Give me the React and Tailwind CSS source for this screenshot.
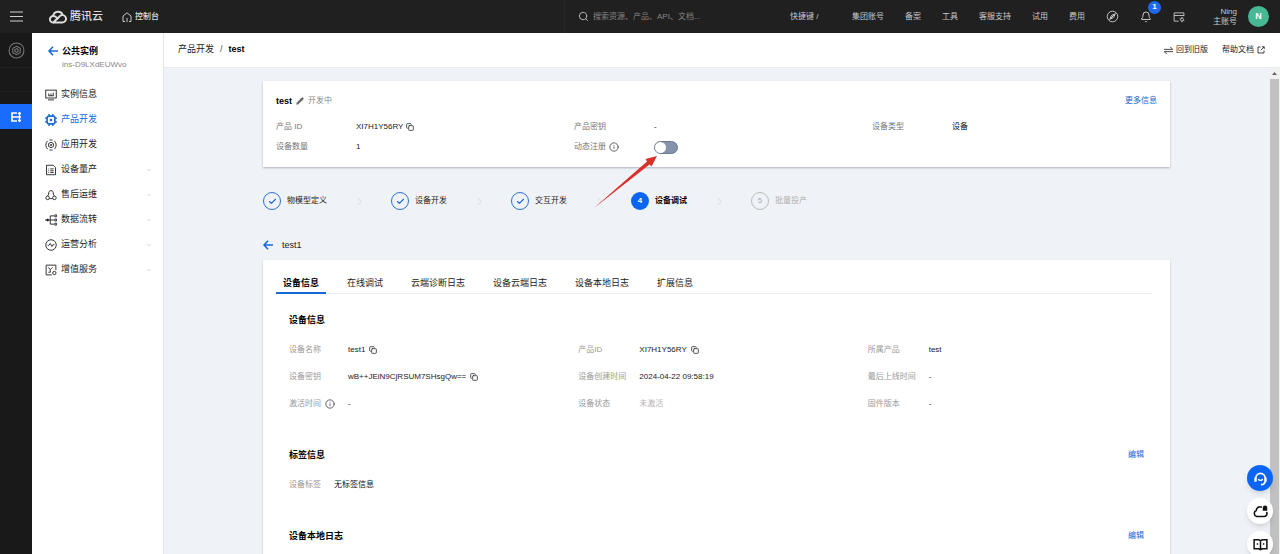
import { useState } from "react";
import { Bell, Check, ChevronDown, ChevronRight, Copy, Info, Pencil, Search } from "lucide-react";

// Small line icons, all on a 16x16 grid
const Glyph = ({ children, size = 12, className = "" }) => (
  <svg width={size} height={size} viewBox="0 0 16 16" fill="none" stroke="currentColor" strokeWidth="1.2" className={`shrink-0 ${className}`} aria-hidden="true">
    {children}
  </svg>
);

const icons = {
  info: (
    <Glyph>
      <rect x="1" y="1.500" width="14" height="10.500" />
      <path d="M4 14.500h8M5 6v3M8 6v3M11 5v4M4.500 9h7" />
    </Glyph>
  ),
  product: (
    <Glyph>
      <rect x="2.800" y="2.800" width="10.400" height="10.400" rx="2.500" strokeWidth="2.200" />
      <path d="M5.500 0v3M10.500 0v3M5.500 13v3M10.500 13v3M0 5.500h3M0 10.500h3M13 5.500h3M13 10.500h3" strokeWidth="1.800" />
      <rect x="7" y="7" width="2" height="2" fill="currentColor" />
    </Glyph>
  ),
  app: (
    <Glyph>
      <path d="M3.500 2.500a7.500 7.500 0 0 0 0 11M12.500 2.500a7.500 7.500 0 0 1 0 11M6 1.300h4M6 14.700h4" />
      <path d="M8 4.300l3.200 1.800v3.800L8 11.700 4.800 9.900V6.100z" />
      <circle cx="8" cy="8" r="1" />
    </Glyph>
  ),
  mass: (
    <Glyph>
      <path d="M2 1.700h9l3 3v9.600H2z" />
      <path d="M4.500 6.500h1M7 6.500h4.500M4.500 9h1M7 9h4.500M4.500 11.300h1M7 11.300h4.500" />
    </Glyph>
  ),
  service: (
    <Glyph>
      <path d="M3.500 9.300L5.300 6M12.500 9.300L10.700 6M6 12.800h4" />
      <path d="M5 6.500a3.200 3.200 0 1 1 6 0" />
      <circle cx="3.500" cy="11.800" r="2.400" />
      <circle cx="12.500" cy="11.800" r="2.400" />
    </Glyph>
  ),
  flow: (
    <Glyph>
      <path d="M0 8h12M7 2.500v11M7 2.500h5M7 13.500h5" />
      <path d="M13 1.200h2.500v2.500H13zM13 6.800h2.500v2.500H13zM13 12.300h2.500v2.500H13z" />
      <circle cx="3.500" cy="8" r="1.200" fill="currentColor" />
    </Glyph>
  ),
  analysis: (
    <Glyph>
      <circle cx="8" cy="8" r="7" />
      <path d="M3.500 8.500h1.700L7 6l2.300 4 1.500-2.500h1.700" />
    </Glyph>
  ),
  value: (
    <Glyph>
      <path d="M14.500 8V1.500h-13v13H9" />
      <path d="M4.500 4.500l2.500 3 3-3M7 7.500V11M4.500 11H7" />
      <circle cx="12.500" cy="12" r="2.200" />
    </Glyph>
  ),
};

const menu = [
  { label: "实例信息", icon: "info" },
  { label: "产品开发", icon: "product", active: true },
  { label: "应用开发", icon: "app" },
  { label: "设备量产", icon: "mass", sub: true },
  { label: "售后运维", icon: "service", sub: true },
  { label: "数据流转", icon: "flow", sub: true },
  { label: "运营分析", icon: "analysis", sub: true },
  { label: "增值服务", icon: "value", sub: true },
];

const topLinks = ["集团账号", "备案", "工具", "客服支持", "试用", "费用"];
const steps = ["物模型定义", "设备开发", "交互开发", "设备调试", "批量投产"];
const tabs = ["设备信息", "在线调试", "云端诊断日志", "设备云端日志", "设备本地日志", "扩展信息"];

const deviceColumns = [
  [
    { label: "设备名称", value: "test1", copy: true },
    { label: "设备密钥", value: "wB++JEiN9CjRSUM7SHsgQw==", copy: true },
    { label: "激活时间", value: "-", info: true },
  ],
  [
    { label: "产品ID", value: "XI7H1Y56RY", copy: true },
    { label: "设备创建时间", value: "2024-04-22 09:58:19" },
    { label: "设备状态", value: "未激活", muted: true },
  ],
  [
    { label: "所属产品", value: "test" },
    { label: "最后上线时间", value: "-" },
    { label: "固件版本", value: "-" },
  ],
];

const BackArrow = () => (
  <svg width="10" height="10" viewBox="0 0 10 10" fill="none" stroke="#1769d8" strokeWidth="1.600" className="shrink-0" aria-hidden="true">
    <path d="M5 .8L1 5l4 4.200M1.200 5H10" />
  </svg>
);

const CopyButton = () => (
  <button type="button" aria-label="复制" className="shrink-0 text-[#333]">
    <Copy size={8} strokeWidth={2.5} />
  </button>
);

const TopBar = () => (
  <header className="flex h-[33px] shrink-0 items-center bg-[#202020] text-[8px] text-[#c8c8c8]">
    <button type="button" aria-label="菜单" className="flex w-8 justify-center">
      <svg width="13" height="11" viewBox="0 0 13 11" stroke="#d0d0d0" strokeWidth="1.200">
        <path d="M0 1h13M0 5.500h13M0 10h13" />
      </svg>
    </button>
    <a href="#" className="ml-[17px] flex items-center gap-[3px] text-[11px] font-medium text-[#dedede]">
      <svg width="18" height="14" viewBox="0 0 18 14" fill="none" stroke="#dedede" strokeWidth="1.900">
        <path d="M5 12.500a3.300 3.300 0 1 1-.7-6.500c1.200 0 2.300.6 3.400 1.700l1.500 1.400" />
        <path d="M4.100 5.900a5 5 0 0 1 9.700-.7M4.500 12.500h8.900a3.700 3.700 0 1 0-2.700-6.300L4.500 12.200" />
      </svg>
      腾讯云
    </a>
    <a href="#" className="ml-[19px] flex items-center gap-[3px] font-medium text-[#dedede]">
      <svg width="10" height="10" viewBox="0 0 10 10" fill="none" stroke="#c8c8c8">
        <path d="M3 9.500H1V4l4-3.200L9 4v5.500H7M5 6v4" />
      </svg>
      控制台
    </a>
    <div className="min-w-4 flex-1" />
    <label className="flex h-full w-[226px] items-center gap-1 border-l border-[#262626] pl-[13px]">
      <Search size={11} className="shrink-0 text-[#bdbdbd]" />
      <input type="search" aria-label="搜索" placeholder="搜索资源、产品、API、文档..." className="min-w-0 flex-1 bg-transparent outline-none placeholder:text-[#858585]" />
    </label>
    <span className="w-[62px] shrink-0">快捷键 /</span>
    <nav className="flex shrink-0 items-center gap-[21px] whitespace-nowrap pr-[11px]">
      {topLinks.map((t) => (
        <a key={t} href="#">{t}</a>
      ))}
      <button type="button" aria-label="探索">
        <Glyph size={13}>
          <circle cx="8" cy="8" r="6.500" />
          <path d="M11.500 4.500L9.300 9.300l-4.800 2.200 2.200-4.800zM5.500 10.500l5-5" />
        </Glyph>
      </button>
      <button type="button" aria-label="消息" className="relative">
        <Bell size={12} strokeWidth={2} />
        <span className="absolute -top-[10px] left-2 flex size-[13px] items-center justify-center rounded-full bg-[#1f69f0] text-[8px] font-bold text-white">1</span>
      </button>
      <button type="button" aria-label="设置">
        <Glyph size={12}>
          <path d="M7.500 13.500h-6v-11h13V7M1.500 6h13" />
          <circle cx="12" cy="11.500" r="2" />
          <path d="M12 8v1.500M12 13.500V15M8.800 9.800l1.400.7M13.800 12.500l1.400.7" />
        </Glyph>
      </button>
      <button type="button" className="ml-[7px] flex items-center gap-[11px]">
        <span className="text-right leading-[10px]">
          Ning
          <br />
          主账号
        </span>
        <span className="flex size-[21px] items-center justify-center rounded-full bg-[#46b893] text-[9px] font-bold text-white">N</span>
      </button>
    </nav>
  </header>
);

const Rail = () => (
  <nav className="w-8 shrink-0 bg-[#191919] text-[#777]">
    <button type="button" aria-label="物联网" className="flex h-[35px] w-full items-center justify-center border-b border-[#222]">
      <Glyph size={17}>
        <circle cx="8" cy="8" r="7" strokeWidth="1" />
        <path d="M8 4l3.500 2v4L8 12l-3.500-2V6zM6.500 7.200L8 6.300l1.500.9v1.700L8 9.800l-1.500-.9z" strokeWidth="1" />
      </Glyph>
    </button>
    <div className="h-6 border-b border-[#202020]" />
    <button type="button" aria-label="物联网开发平台" className="mt-3 flex h-[25px] w-full items-center justify-center bg-[#1a6dfc]">
      <svg width="11" height="10" viewBox="0 0 11 10" fill="none" stroke="#fff" strokeWidth="1.600">
        <path d="M6 1H1v8h5M1 5h9" />
        <path d="M8.500 0v10" strokeWidth="1.300" />
        <path d="M7 1.500h3M7 8.500h3" strokeWidth="1.600" />
      </svg>
    </button>
  </nav>
);

const SideMenu = () => (
  <aside className="w-[132px] shrink-0 border-r border-[#e1e5ea] bg-white text-[9px] text-[#222]">
    <a href="#" className="mt-[11px] flex items-center gap-1 pl-4 font-bold leading-[14px] text-black">
      <BackArrow />
      公共实例
    </a>
    <p className="pl-[30px] text-[8px] leading-[14px] text-[#888]">ins-D9LXdEUWvo</p>
    <ul className="mt-[10px]">
      {menu.map((m) => (
        <li key={m.label}>
          <button type="button" className={`flex h-[25px] w-full items-center pl-[13px] pr-[11px] ${m.active ? "text-[#1769d8]" : ""}`}>
            {icons[m.icon]}
            <span className="ml-1 flex-1 text-left">{m.label}</span>
            {m.sub && <ChevronDown size={6} className="text-[#aaa]" />}
          </button>
        </li>
      ))}
    </ul>
  </aside>
);

const ProductCard = () => {
  const [dynamic, setDynamic] = useState(false);

  return (
    <section className="bg-white pb-[10px] pl-[13px] pt-[12px] shadow-[0_1px_2px_rgba(54,58,80,0.35)]">
      <div className="flex items-center pr-[13px] leading-4">
        <h1 className="text-[9px] font-bold text-black">test</h1>
        <button type="button" aria-label="编辑名称" className="ml-1 text-[#666]">
          <Pencil size={8} fill="currentColor" />
        </button>
        <span className="ml-1 text-[8px] text-[#888]">开发中</span>
        <a href="#" className="ml-auto text-[8px] text-[#1769d8]">更多信息</a>
      </div>
      <dl className="mt-2 grid grid-cols-3 text-[8px] leading-5 text-[#777]">
        <div className="flex">
          <dt className="w-20">产品 ID</dt>
          <dd className="flex items-center gap-[3px] text-[#222]">XI7H1Y56RY <CopyButton /></dd>
        </div>
        <div className="flex">
          <dt className="w-20">产品密钥</dt>
          <dd className="text-[#222]">-</dd>
        </div>
        <div className="flex">
          <dt className="w-20">设备类型</dt>
          <dd className="text-[#111]">设备</dd>
        </div>
        <div className="flex">
          <dt className="w-20">设备数量</dt>
          <dd className="text-[#222]">1</dd>
        </div>
        <div className="flex">
          <dt className="flex w-20 items-center gap-[3px]">
            <label htmlFor="dynamic">动态注册</label>
            <Info size={10} className="text-[#444]" />
          </dt>
          <dd className="relative flex items-center">
            <input
              id="dynamic"
              type="checkbox"
              role="switch"
              checked={dynamic}
              onChange={() => setDynamic(!dynamic)}
              className="h-[13px] w-6 appearance-none rounded-full border border-[#6d7b92] bg-[#8592ab] before:block before:size-[11px] before:rounded-full before:bg-white checked:bg-[#1769d8] checked:before:ml-[11px]"
            />
            {/* pointer arrow to the switch */}
            <svg width="64" height="53" viewBox="0 0 64 53" className="pointer-events-none absolute -left-[60px] top-[19px] z-10" aria-hidden="true">
              <path d="M0 52L53 5.500L51.500 3L63 0L57.500 10.500L55.500 8.500z" fill="#d9302a" />
            </svg>
          </dd>
        </div>
      </dl>
    </section>
  );
};

const Steps = ({ current }) => (
  <ol className="mt-[25px] flex items-center text-[8px]">
    {steps.map((s, i) => (
      <li key={s} className="flex items-center">
        {i > 0 && (
          <span className="flex w-16 justify-center">
            <ChevronRight size={13} strokeWidth={1.5} className="text-[#cfd3da]" />
          </span>
        )}
        {i < current && (
          <span className="flex size-[18px] items-center justify-center rounded-full border border-[#2b74d4] text-[#1769d8]">
            <Check size={9} strokeWidth={3} />
          </span>
        )}
        {i === current && <span className="flex size-[18px] items-center justify-center rounded-full bg-[#0a66f2] font-bold text-white">{i + 1}</span>}
        {i > current && <span className="flex size-[18px] items-center justify-center rounded-full border border-[#bbb] text-[#aaa]">{i + 1}</span>}
        <span className={`ml-[6px] ${i === current ? "font-bold text-black" : i > current ? "text-[#b0b0b0]" : "text-[#222]"}`}>{s}</span>
      </li>
    ))}
  </ol>
);

const SectionTitle = ({ children, edit }) => (
  <div className="flex items-center justify-between leading-4">
    <h2 className="text-[9px] font-bold text-black">{children}</h2>
    {edit && <button type="button" className="text-[8px] text-[#1769d8]">编辑</button>}
  </div>
);

const DevicePanel = () => {
  const [tab, setTab] = useState(tabs[0]);

  return (
    <section className="bg-white px-[13px] pb-10 pt-[14px] shadow-[0_1px_2px_rgba(54,58,80,0.3)]">
      <div role="tablist" className="mr-[6px] flex gap-[14px] border-b border-[#e9ebee] text-[9px] text-[#222]">
        {tabs.map((t) => (
          <button
            key={t}
            type="button"
            role="tab"
            aria-selected={t === tab}
            onClick={() => setTab(t)}
            className={`-mb-px h-5 border-b-2 px-[7px] pt-[2px] ${t === tab ? "border-[#1769d8] font-bold text-black" : "border-transparent"}`}
          >
            {t}
          </button>
        ))}
      </div>

      <div className="mt-[18px] flex flex-col gap-[30px] px-[13px] text-[8px]">
        <div>
          <SectionTitle>设备信息</SectionTitle>
          <div className="-mr-[13px] mt-2 grid grid-cols-3">
            {deviceColumns.map((rows, i) => (
              <dl key={i} className="grid auto-rows-[27px] grid-cols-[auto_1fr] items-center gap-x-[13px]">
                {rows.map((r) => (
                  <div key={r.label} className="contents">
                    <dt className="flex items-center gap-1 text-[#999]">
                      {r.label}
                      {r.info && <Info size={10} className="text-[#444]" />}
                    </dt>
                    <dd className={`flex items-center gap-1 ${r.muted ? "text-[#b5b5b5]" : "text-[#222]"}`}>
                      {r.value}
                      {r.copy && <CopyButton />}
                    </dd>
                  </div>
                ))}
              </dl>
            ))}
          </div>
        </div>

        <div>
          <SectionTitle edit>标签信息</SectionTitle>
          <dl className="mt-2 flex h-[27px] items-center gap-[13px]">
            <dt className="text-[#999]">设备标签</dt>
            <dd className="text-[#111]">无标签信息</dd>
          </dl>
        </div>

        <SectionTitle edit>设备本地日志</SectionTitle>
      </div>
    </section>
  );
};

const FloatButtons = () => (
  <div className="fixed -bottom-[3px] right-[7px] z-20 flex flex-col gap-[7px] text-[#111]">
    <button type="button" aria-label="在线客服" className="flex size-[26px] items-center justify-center rounded-full bg-[#0a66f2] text-white shadow-md">
      <Glyph size={15}>
        <path d="M3 11V7.500a5 5 0 0 1 10 0V10c0 3-1.500 4.500-4.500 4.500" strokeWidth="1.700" />
        <path d="M2.500 7v4.500M13.500 7v4.500" strokeWidth="2.200" />
        <path d="M5.700 8.500c.8 2 3.800 2 4.600 0" strokeWidth="1.500" />
      </Glyph>
    </button>
    <button type="button" aria-label="云助手" className="flex size-[26px] items-center justify-center rounded-full bg-white shadow-md">
      <Glyph size={15}>
        <path d="M9.500 3.500a4 4 0 0 0-6 3.500 3.300 3.300 0 0 0 .5 6.300h8a3 3 0 0 0 2.300-4.800" strokeWidth="1.700" />
        <path d="M11 6.500V4a1.800 1.800 0 0 1 3.600 0v2.500z" fill="currentColor" />
      </Glyph>
    </button>
    <button type="button" aria-label="文档" className="flex size-[26px] items-center justify-center rounded-full bg-white shadow-md">
      <Glyph size={15}>
        <path d="M1.200 3H6l2 1 2-1h4.800v9.500H10l-2 1-2-1H1.200zM8 4v9.500" strokeWidth="1.600" />
        <path d="M4 7.500h1.500M10.500 7.500H12" strokeWidth="1.600" />
      </Glyph>
    </button>
  </div>
);

const App = () => (
  <div className="flex h-screen flex-col overflow-hidden bg-[#eff2f7] font-['Liberation_Sans','Noto_Sans_CJK_SC',sans-serif]">
    <TopBar />
    <div className="flex min-h-0 flex-1">
      <Rail />
      <SideMenu />
      <div className="flex min-w-0 flex-1 flex-col">
        <div className="flex h-[35px] shrink-0 items-center border-b border-[#e8ecf1] bg-white pl-[14px] pr-[15px] text-[9px]">
          <nav className="flex gap-[6px] text-[#222]">
            <a href="#">产品开发</a>
            <span className="text-[#555]">/</span>
            <span className="font-bold text-black">test</span>
          </nav>
          <div className="ml-auto flex items-center gap-[14px] text-[8px] text-[#222]">
            <a href="#" className="flex items-center gap-[3px]">
              <Glyph size={9}>
                <path d="M0 6h15.500L11 1.500M16 10H.5L5 14.500" strokeWidth="1.500" />
              </Glyph>
              回到旧版
            </a>
            <a href="#" className="flex items-center gap-[3px]">
              帮助文档
              <Glyph size={8}>
                <path d="M7 2H2v12h12V9M10 1.500h4.500V6M14 2L7.500 8.500" strokeWidth="1.700" />
              </Glyph>
            </a>
          </div>
        </div>
        <div className="flex min-h-0 flex-1">
          <main className="min-w-0 flex-1 overflow-hidden">
            <div className="mx-auto max-w-[907px] pt-[13px]">
              <ProductCard />
              <Steps current={3} />
              <a href="#" className="mb-[7px] mt-[27px] flex items-center gap-[9px] text-[9px] leading-4 text-[#222]">
                <BackArrow />
                test1
              </a>
              <DevicePanel />
            </div>
          </main>
          <div className="flex w-[11px] shrink-0 flex-col items-center bg-[#f1f1f1]" aria-hidden="true">
            <svg width="5" height="11" viewBox="0 0 5 11">
              <path d="M0 7l2.500-3L5 7z" fill="#666" />
            </svg>
            <div className="w-[9px] flex-1 bg-[#c1c1c1]" />
          </div>
        </div>
      </div>
    </div>
    <FloatButtons />
  </div>
);

export default App;
